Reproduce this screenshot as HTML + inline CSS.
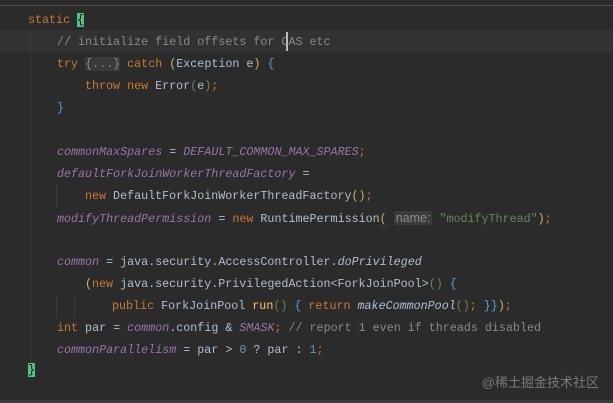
<!DOCTYPE html><html><head><style>
body{margin:0;background:#2b2b2b;width:613px;height:403px;overflow:hidden;position:relative;font-family:"Liberation Mono",monospace;font-size:11.7px;color:#b3bfcc}
.l{position:absolute;left:0;white-space:pre;height:22px;line-height:22px}
.k{color:#cc7832}.f{color:#9876aa;font-style:italic}.c{color:#8a8a8a}.s{color:#6a8759}.i{font-style:italic}.b{color:#5a9bd5}
.hl{position:absolute;left:0;right:0;top:30px;height:22px;background:#323232}
.g{position:absolute;width:1px;background:#3c3c3c}
.m{background:#4cc389;color:#111}
.fold{background:#3a3a3a;color:#888}
.hint{background:#3b3b3b;color:#8c8c8c;font-family:"Liberation Sans",sans-serif;font-size:12.5px;border-radius:3px;padding:0 2px}
</style></head><body>
<div style="position:absolute;left:0;right:0;top:5px;height:1px;background:#4a4a4a"></div>
<div class="hl"></div>
<div class="g" style="left:30px;top:31px;height:346px"></div>
<div class="g" style="left:56px;top:185px;height:22px"></div>
<div class="g" style="left:56px;top:295px;height:22px"></div><div class="g" style="left:74px;top:295px;height:22px"></div>
<div class="l" style="top:9px;left:28px"><span class="k">static</span> <span class="m">{</span></div>
<div class="l" style="top:31px;left:57px"><span class="c">// initialize field offsets for CAS etc</span></div>
<div style="position:absolute;left:286px;top:32px;width:2px;height:19px;background:#bbb"></div>
<div class="l" style="top:53px;left:57px"><span class="k">try</span> <span class="fold">{...}</span> <span class="k">catch</span> <span style="color:#c8b66a">(</span>Exception e<span style="color:#c8b66a">)</span> <span class="b">{</span></div>
<div class="l" style="top:75px;left:85px"><span class="k">throw new</span> Error<span class="s">(</span>e<span class="s">)</span><span class="k">;</span></div>
<div class="l" style="top:97px;left:57px"><span class="b">}</span></div>
<div class="l" style="top:141px;left:57px"><span class="f">commonMaxSpares</span> = <span class="f">DEFAULT_COMMON_MAX_SPARES</span><span class="k">;</span></div>
<div class="l" style="top:163px;left:57px"><span class="f">defaultForkJoinWorkerThreadFactory</span> =</div>
<div class="l" style="top:185px;left:85px"><span class="k">new</span> DefaultForkJoinWorkerThreadFactory<span style="color:#c8b66a">()</span><span class="k">;</span></div>
<div class="l" style="top:207px;left:57px"><span class="f">modifyThreadPermission</span> = <span class="k">new</span> RuntimePermission<span style="color:#c8b66a">(</span> <span class="hint">name:</span> <span class="s">"modifyThread"</span><span style="color:#c8b66a">)</span><span class="k">;</span></div>
<div class="l" style="top:251px;left:57px"><span class="f">common</span> = java.security.AccessController.<span class="i">doPrivileged</span></div>
<div class="l" style="top:273px;left:85px"><span style="color:#c8b66a">(</span><span class="k">new</span> java.security.PrivilegedAction&lt;ForkJoinPool&gt;<span style="color:#6a8759">()</span> <span class="b">{</span></div>
<div class="l" style="top:295px;left:112px"><span class="k">public</span> ForkJoinPool <span style="color:#ffc66d">run</span><span class="s">()</span> <span class="b">{</span> <span class="k">return</span> <span class="i">makeCommonPool</span><span class="s">()</span><span class="k">;</span> <span class="b">}}</span><span style="color:#c8b66a">)</span><span class="k">;</span></div>
<div class="l" style="top:317px;left:57px"><span class="k">int</span> par = <span class="f">common</span>.config &amp; <span class="f">SMASK</span><span class="k">;</span> <span class="c">// report 1 even if threads disabled</span></div>
<div class="l" style="top:339px;left:57px"><span class="f">commonParallelism</span> = par &gt; <span style="color:#6897bb">0</span> ? par : <span style="color:#6897bb">1</span><span class="k">;</span></div>
<div class="l" style="top:359px;left:28px"><span class="m">}</span></div>
<div style="position:absolute;right:14px;top:372px;color:#7a7a7a;font-family:'Liberation Sans','Noto Sans CJK SC',sans-serif;font-size:13px">@稀土掘金技术社区</div>
<div style="position:absolute;left:0;right:0;bottom:0;height:3px;background:#3c3c3c"></div>
</body></html>
